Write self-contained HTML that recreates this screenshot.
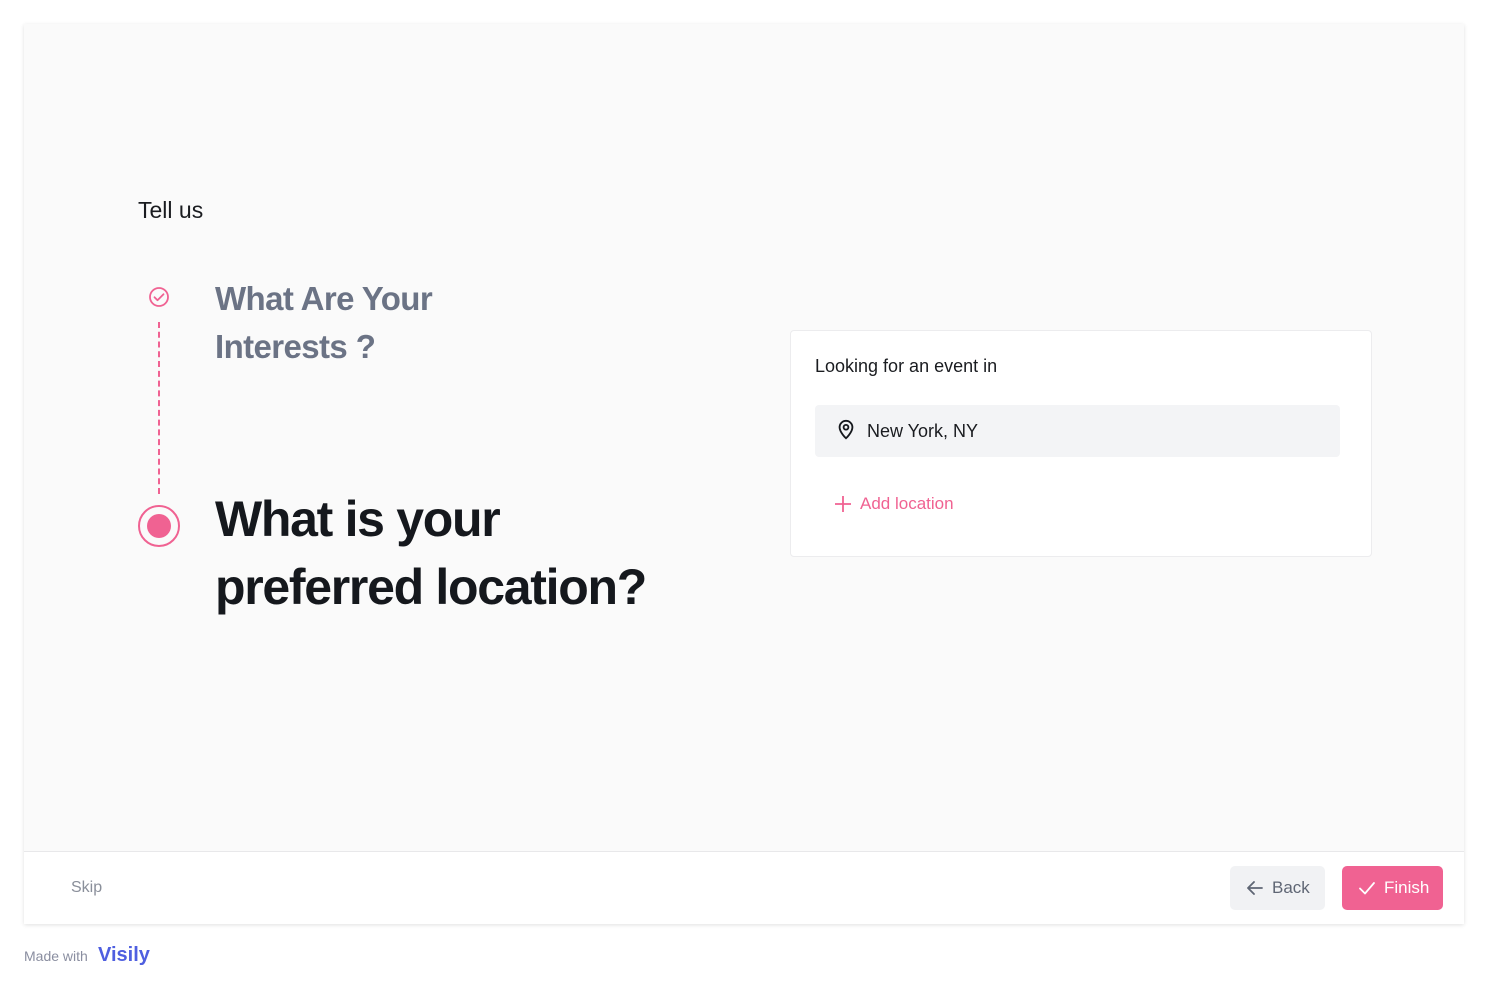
<!DOCTYPE html>
<html><head><style>
*{box-sizing:border-box;margin:0;padding:0}
body{width:1488px;height:988px;background:#fff;font-family:"Liberation Sans",sans-serif;position:relative;overflow:hidden}
.frame{position:absolute;left:24px;top:24px;width:1440px;height:900px;background:#fafafa;box-shadow:0 1px 4px rgba(0,0,0,.12)}
.foot{position:absolute;left:0;top:827px;width:1440px;height:73px;background:#fff;border-top:1px solid #e8e8ea}
.abs{position:absolute}
</style></head><body>
<div class="frame">
  <div class="abs" style="left:114px;top:173px;font-size:23px;color:#1a1c20">Tell us</div>
  <svg class="abs" style="left:123px;top:261px" width="24" height="24" viewBox="0 0 24 24"><circle cx="12" cy="12" r="9" fill="none" stroke="#f06292" stroke-width="1.8"/><path d="M7.5 12.2l3 3 6-6" fill="none" stroke="#f06292" stroke-width="1.8" stroke-linecap="round" stroke-linejoin="round"/></svg>
  <div class="abs" style="left:134px;top:298px;width:0;height:172px;border-left:2px dashed #f06292"></div>
  <svg class="abs" style="left:113px;top:480px" width="44" height="44" viewBox="0 0 44 44"><circle cx="22" cy="22" r="20" fill="none" stroke="#f06292" stroke-width="2"/><circle cx="22" cy="22" r="12" fill="#f06292"/></svg>
  <div class="abs" style="left:191px;top:251px;font-size:33px;font-weight:bold;color:#6b7385;line-height:48px;letter-spacing:-0.6px">What Are Your<br>Interests ?</div>
  <div class="abs" style="left:191px;top:461px;font-size:50px;font-weight:bold;color:#15181d;line-height:68px;letter-spacing:-1.3px">What is your<br>preferred location?</div>
  <div class="abs" style="left:766px;top:306px;width:582px;height:227px;background:#fff;border:1px solid #ececee;border-radius:4px">
    <div class="abs" style="left:24px;top:25px;font-size:18px;color:#1a1c20">Looking for an event in</div>
    <div class="abs" style="left:24px;top:74px;width:525px;height:52px;background:#f3f4f6;border-radius:4px">
      <svg class="abs" style="left:20px;top:14px" width="22" height="22" viewBox="0 0 24 24"><path d="M12 21s-7-6.5-7-12a7 7 0 0 1 14 0c0 5.5-7 12-7 12z" fill="none" stroke="#15181d" stroke-width="2"/><circle cx="12" cy="9" r="2.6" fill="none" stroke="#15181d" stroke-width="2"/></svg>
      <div class="abs" style="left:52px;top:16px;font-size:18px;color:#1a1c20">New York, NY</div>
    </div>
    <svg class="abs" style="left:43px;top:164px" width="18" height="18" viewBox="0 0 18 18"><path d="M9 1v16M1 9h16" stroke="#f06292" stroke-width="1.8"/></svg>
    <div class="abs" style="left:69px;top:163px;font-size:17px;color:#f06292">Add location</div>
  </div>
  <div class="foot">
    <div class="abs" style="left:47px;top:27px;font-size:16px;color:#8a8f9a">Skip</div>
    <div class="abs" style="left:1206px;top:14px;width:95px;height:44px;background:#f1f2f4;border-radius:5px">
      <svg class="abs" style="left:16px;top:13px" width="18" height="18" viewBox="0 0 18 18"><path d="M16 9H2M8 3L2 9l6 6" fill="none" stroke="#5f6674" stroke-width="1.8" stroke-linecap="round" stroke-linejoin="round"/></svg>
      <div class="abs" style="left:42px;top:12px;font-size:17px;color:#5f6674">Back</div>
    </div>
    <div class="abs" style="left:1318px;top:14px;width:101px;height:44px;background:#f06292;border-radius:5px">
      <svg class="abs" style="left:16px;top:13px" width="18" height="18" viewBox="0 0 18 18"><path d="M2 9.5l5 5L16 4" fill="none" stroke="#fff" stroke-width="1.8" stroke-linecap="round" stroke-linejoin="round"/></svg>
      <div class="abs" style="left:42px;top:12px;font-size:17px;color:#fff">Finish</div>
    </div>
  </div>
</div>
<div class="abs" style="left:24px;top:948px;font-size:14px;color:#8a8ea0">Made with</div>
<div class="abs" style="left:98px;top:944px;font-size:20px;font-weight:bold;color:#4f5fe0">Visily</div>
</body></html>
